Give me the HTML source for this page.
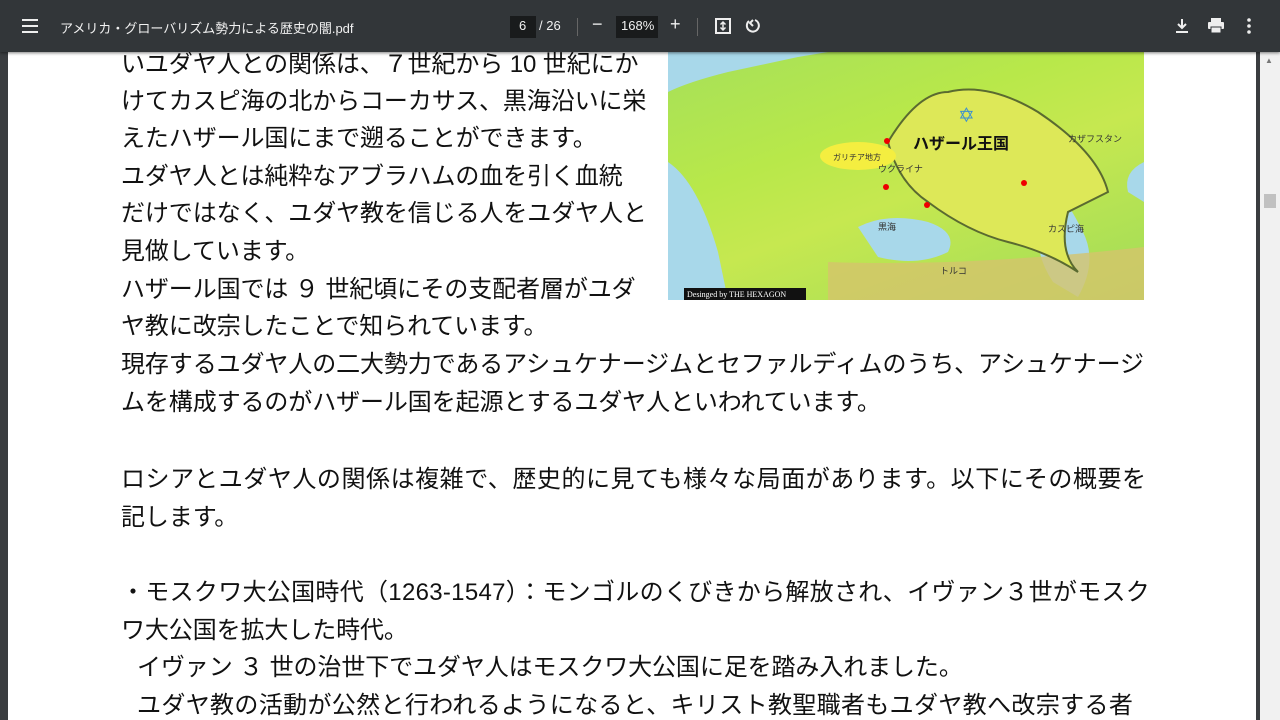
<!DOCTYPE html>
<html><head><meta charset="utf-8"><style>
body{margin:0;width:1280px;height:720px;overflow:hidden;background:#3a3d40;font-family:"Liberation Sans","Noto Sans CJK JP",sans-serif;position:relative}
.tb{position:absolute;left:0;top:0;width:1280px;height:52px;background:#323639;color:#f1f1f1;box-shadow:0 1px 3px rgba(0,0,0,.5);z-index:5}
.tb span{position:absolute;font-size:13px;top:18px}
.page{position:absolute;left:8px;top:52px;width:1248px;height:668px;background:#fff;overflow:hidden}
.sb{position:absolute;left:1260px;top:52px;width:20px;height:668px;background:#f1f1f1}
.l{position:absolute;left:113px;font-size:24px;line-height:38px;white-space:nowrap;color:#111;letter-spacing:-0.1px}
.map{position:absolute;left:660px;top:0;width:476px;height:248px;background:linear-gradient(160deg,#a6e05a 0%,#b8e84a 35%,#c6e850 55%,#a0dc58 100%)}
</style></head><body>
<div class="tb">
<svg style="position:absolute;left:22px;top:19px" width="16" height="14"><rect y="0" width="16" height="2" fill="#eee"/><rect y="6" width="16" height="2" fill="#eee"/><rect y="12" width="16" height="2" fill="#eee"/></svg>
<span style="left:60px">アメリカ・グローバリズム勢力による歴史の闇.pdf</span>
<div style="position:absolute;left:510px;top:16px;width:26px;height:22px;background:#191b1c"></div>
<span style="left:519px">6</span><span style="left:539px">/ 26</span>
<div style="position:absolute;left:577px;top:18px;width:1px;height:18px;background:#666"></div>
<span style="left:592px;font-size:18px;top:14px">−</span>
<div style="position:absolute;left:616px;top:16px;width:42px;height:22px;background:#191b1c"></div>
<span style="left:621px">168%</span>
<span style="left:670px;font-size:18px;top:14px">+</span>
<div style="position:absolute;left:697px;top:18px;width:1px;height:18px;background:#666"></div>
<svg style="position:absolute;left:715px;top:18px" width="16" height="16"><rect x="1" y="1" width="14" height="14" fill="none" stroke="#eee" stroke-width="2"/><path d="M8 4v8M5.5 6.5L8 4l2.5 2.5M5.5 9.5L8 12l2.5-2.5" stroke="#eee" fill="none" stroke-width="1.5"/></svg>
<svg style="position:absolute;left:745px;top:17px" width="17" height="17"><path d="M4 4a6 6 0 1 0 6-1" stroke="#eee" fill="none" stroke-width="2"/><path d="M8 3l-3 3 3 3" stroke="#eee" fill="none" stroke-width="2"/></svg>
<svg style="position:absolute;left:1175px;top:18px" width="14" height="16"><path d="M7 1v9M3 6l4 4 4-4M1 14h12" stroke="#eee" fill="none" stroke-width="2"/></svg>
<svg style="position:absolute;left:1207px;top:17px" width="18" height="17"><rect x="4" y="1" width="10" height="4" fill="#eee"/><rect x="1" y="5" width="16" height="7" rx="1" fill="#eee"/><rect x="4" y="10" width="10" height="6" fill="#eee" stroke="#323639"/></svg>
<svg style="position:absolute;left:1247px;top:18px" width="4" height="16"><circle cx="2" cy="2" r="1.8" fill="#eee"/><circle cx="2" cy="8" r="1.8" fill="#eee"/><circle cx="2" cy="14" r="1.8" fill="#eee"/></svg>
</div>
<div class="page">
<div class="map">
<svg width="476" height="248" style="position:absolute;left:0;top:0">
<path d="M0 40 Q20 30 60 20 L130 5 L160 0 L0 0Z" fill="#a8d8ea"/>
<path d="M0 110 Q30 130 50 200 L60 248 L0 248Z" fill="#a8d8ea"/>
<path d="M190 175 Q220 160 260 170 Q290 180 280 200 Q250 215 210 205 Z" fill="#a8d8ea"/>
<path d="M360 140 Q375 130 372 170 Q365 200 385 230 L410 245 Q430 210 415 180 Q395 140 380 130Z" fill="#a8d8ea"/>
<path d="M476 110 Q455 120 460 140 L476 150Z" fill="#a8d8ea"/>
<path d="M160 210 Q300 215 476 195 L476 248 L160 248Z" fill="#d4c46c" opacity=".8"/>
<path d="M220 90 Q250 40 280 40 Q320 30 370 60 Q430 100 440 140 Q420 150 400 160 Q390 200 410 220 Q380 200 340 190 Q300 180 260 150 Q230 130 220 90Z" fill="#dde858" stroke="#5a6a30" stroke-width="2"/>
<text x="290" y="70" font-size="20" fill="#3b8fd0">✡</text>
<text x="245" y="97" font-size="16" font-weight="bold" fill="#111" font-family="Noto Sans CJK JP">ハザール王国</text>
<ellipse cx="190" cy="104" rx="38" ry="14" fill="#f4ee40"/>
<text x="165" y="108" font-size="8" fill="#333" font-family="Noto Sans CJK JP">ガリチア地方</text>
<text x="210" y="120" font-size="9" fill="#333" font-family="Noto Sans CJK JP">ウクライナ</text>
<text x="210" y="178" font-size="9" fill="#333" font-family="Noto Sans CJK JP">黒海</text>
<text x="380" y="180" font-size="9" fill="#333" font-family="Noto Sans CJK JP">カスピ海</text>
<text x="400" y="90" font-size="9" fill="#333" font-family="Noto Sans CJK JP">カザフスタン</text>
<text x="272" y="222" font-size="9" fill="#333" font-family="Noto Sans CJK JP">トルコ</text>
<circle cx="219" cy="89" r="3" fill="#e00"/><circle cx="218" cy="135" r="3" fill="#e00"/><circle cx="259" cy="153" r="3" fill="#e00"/><circle cx="356" cy="131" r="3" fill="#e00"/>
<rect x="16" y="236" width="122" height="12" fill="#111"/>
<text x="19" y="245" font-size="8" fill="#fff" font-family="Liberation Serif">Desinged by THE HEXAGON</text>
</svg></div>
<div class="l" style="top:-6px">いユダヤ人との関係は、７世紀から 10 世紀にか</div>
<div class="l" style="top:31px">けてカスピ海の北からコーカサス、黒海沿いに栄</div>
<div class="l" style="top:68px">えたハザール国にまで遡ることができます。</div>
<div class="l" style="top:106px">ユダヤ人とは純粋なアブラハムの血を引く血統</div>
<div class="l" style="top:143px">だけではなく、ユダヤ教を信じる人をユダヤ人と</div>
<div class="l" style="top:181px">見做しています。</div>
<div class="l" style="top:219px">ハザール国では ９ 世紀頃にその支配者層がユダ</div>
<div class="l" style="top:256px">ヤ教に改宗したことで知られています。</div>
<div class="l" style="top:294px">現存するユダヤ人の二大勢力であるアシュケナージムとセファルディムのうち、アシュケナージ</div>
<div class="l" style="top:332px">ムを構成するのがハザール国を起源とするユダヤ人といわれています。</div>
<div class="l" style="top:409px;letter-spacing:0.55px">ロシアとユダヤ人の関係は複雑で、歴史的に見ても様々な局面があります。以下にその概要を</div>
<div class="l" style="top:447px">記します。</div>
<div class="l" style="top:522px;letter-spacing:0.3px">・モスクワ大公国時代（1263-1547）：モンゴルのくびきから解放され、イヴァン３世がモスク</div>
<div class="l" style="top:560px">ワ大公国を拡大した時代。</div>
<div class="l" style="top:597px;left:129px">イヴァン ３ 世の治世下でユダヤ人はモスクワ大公国に足を踏み入れました。</div>
<div class="l" style="top:635px;left:129px;letter-spacing:0.35px">ユダヤ教の活動が公然と行われるようになると、キリスト教聖職者もユダヤ教へ改宗する者</div>
</div>
<div class="sb"><div style="position:absolute;left:5px;top:4px;font-size:8px;color:#777">▲</div><div style="position:absolute;left:4px;top:142px;width:12px;height:14px;background:#c1c1c1"></div></div>
</body></html>
